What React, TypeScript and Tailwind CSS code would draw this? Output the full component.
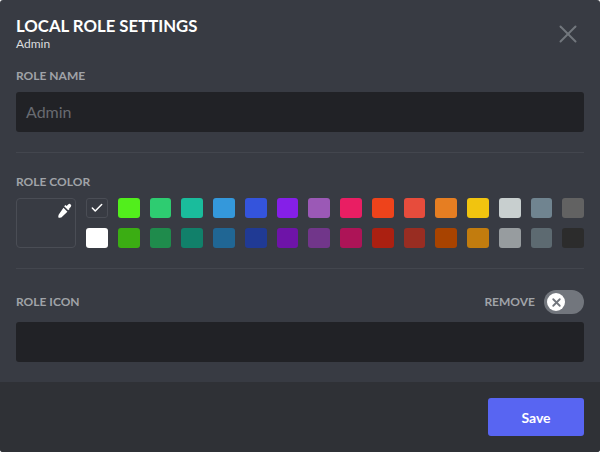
import { Check, X } from 'lucide-react'

const topColors = [
  '#52ee1c', '#2ecc71', '#1abc9c', '#3498db', '#3454dc', '#851fe8', '#9b59b6', '#e91e63',
  '#ee431b', '#e74c3c', '#e67e22', '#f1c40f', '#c8cfcf', '#708490', '#626262',
]
const bottomColors = [
  '#3bad13', '#1f8b4c', '#11806a', '#206694', '#203a94', '#6e14a8', '#71368a', '#ad1457',
  '#ab2011', '#992d22', '#a84300', '#c27c0e', '#979c9f', '#5d6a71', '#2c2c2c',
]

const labelClass = 'text-[12px] leading-[16px] font-bold text-[#a0a3a8] uppercase'

const Swatch = ({ color }: { color: string }) => (
  <div className="h-5 rounded-[3px]" style={{ backgroundColor: color }} />
)

const Eyedropper = () => (
  <svg viewBox="0 0 16 16" className="w-[15px] h-[15px] absolute top-[4px] right-[3px]" fill="#fff">
    <path d="M10.2 3.2 11.9 1.5a1.9 1.9 0 0 1 2.7 2.7l-1.7 1.7.5.5-1.4 1.4-4.4-4.4 1.4-1.4z" />
    <path d="M6.9 5 11.1 9.2 5.2 15c-.6.6-1.3.8-2 .5l-1 .4-1-1 .4-1c-.3-.7-.1-1.4.5-2z" />
  </svg>
)

export default function App() {
  return (
    <div
      className="w-[600px] h-[452px] flex flex-col bg-[#383b43] rounded-[3px] overflow-hidden"
      style={{ fontFamily: 'Lato, "Noto Sans", sans-serif' }}
    >
      <div className="flex-1 px-4">
        <div className="flex justify-between pt-4 h-[68px]">
          <div>
            <h1 className="text-[16.75px] leading-[20px] font-bold text-white uppercase">Local Role Settings</h1>
            <p className="text-[12px] leading-[16px] text-[#dcddde]">Admin</p>
          </div>
          <X className="w-[30px] h-[30px] text-[#72767d] mt-[3px] mr-[1px]" strokeWidth={1.6} />
        </div>

        <div className={labelClass}>Role Name</div>
        <div className="mt-[8px] h-10 rounded-[3px] bg-[#212226] flex items-center px-[10px] text-[16px] text-[#686b71]">
          Admin
        </div>
        <div className="h-px bg-[#43464e] mt-5" />

        <div className={`${labelClass} mt-[21px]`}>Role Color</div>
        <div className="flex gap-[10px] mt-[8px]">
          <div className="relative w-[60px] h-[50px] rounded-[4px] border border-[#4a4d55] shrink-0">
            <Eyedropper />
          </div>
          <div className="flex-1 grid grid-cols-[repeat(16,1fr)] gap-[10px]">
            <div className="h-5 rounded-[3px] border border-[#4a4d55] flex items-center justify-center">
              <Check className="w-[14px] h-[14px] text-white" strokeWidth={2.6} />
            </div>
            {topColors.map((color) => (
              <Swatch key={color} color={color} />
            ))}
            <Swatch color="#ffffff" />
            {bottomColors.map((color) => (
              <Swatch key={color} color={color} />
            ))}
          </div>
        </div>
        <div className="h-px bg-[#43464e] mt-5" />

        <div className="flex items-center justify-between mt-[21px]">
          <div className={labelClass}>Role Icon</div>
          <div className="flex items-center gap-[9px]">
            <div className={labelClass}>Remove</div>
            <div className="relative w-10 h-6 rounded-full bg-[#72767d]">
              <div className="absolute left-[3px] top-[3px] w-[18px] h-[18px] rounded-full bg-white flex items-center justify-center">
                <X className="w-[13px] h-[13px] text-[#72767d]" strokeWidth={3.4} />
              </div>
            </div>
          </div>
        </div>
        <div className="mt-[8px] h-10 rounded-[3px] bg-[#212226]" />
      </div>

      <div className="h-[70px] bg-[#2f3136] flex items-start justify-end px-4 pt-4">
        <button className="w-24 h-[38px] rounded-[3px] bg-[#5865f2] text-white text-[14px] font-bold">
          Save
        </button>
      </div>
    </div>
  )
}
